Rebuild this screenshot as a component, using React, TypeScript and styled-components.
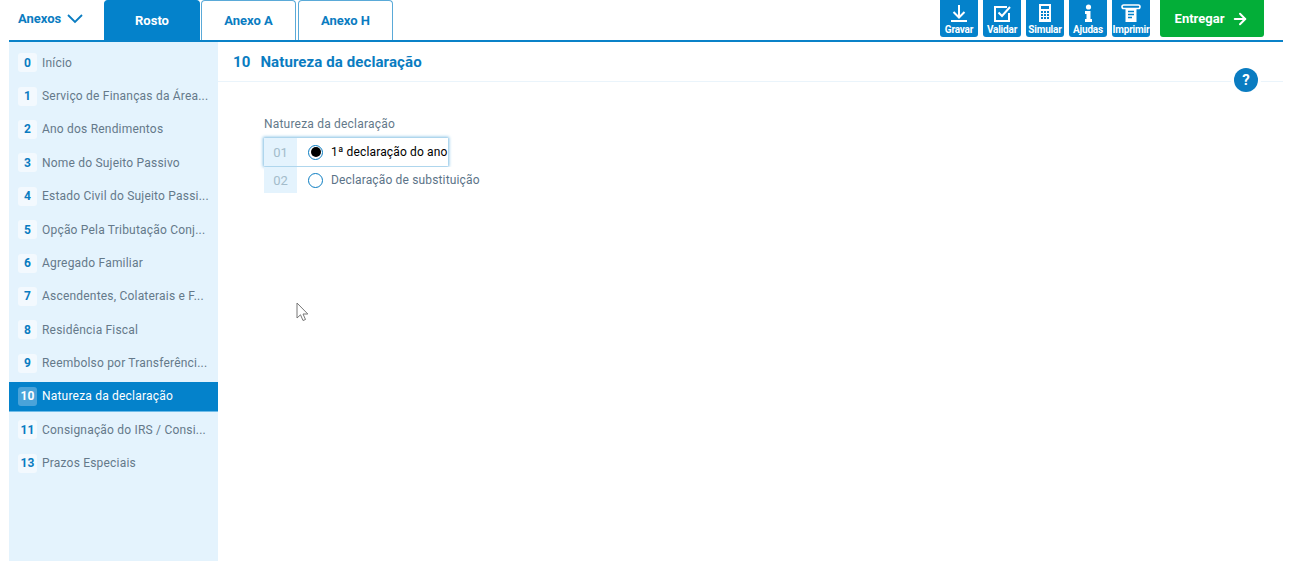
import React from 'react';
import styled, { createGlobalStyle } from 'styled-components';
import { ArrowRight } from 'lucide-react';

const GlobalStyle = createGlobalStyle`
	html, body {
		margin: 0;
		padding: 0;
		height: 100%;
		background: #fff;
		overflow: hidden;
	}
	body {
		font-family: Roboto, "Liberation Sans", sans-serif;
	}
`;

const Page = styled.div`
	width: 1274px;
	height: 561px;
	margin-left: 9px;
	display: flex;
	flex-direction: column;
	position: relative;
`;

const TopBar = styled.div`
	height: 40px;
	flex: none;
	display: flex;
	align-items: flex-end;
	border-bottom: 2px solid #0a82c8;
`;

const AnexosToggle = styled.div`
	width: 95px;
	height: 40px;
	flex: none;
	padding: 0 0 0 9px;
	box-sizing: border-box;
	display: flex;
	align-items: flex-start;
	gap: 6px;
	color: #0a7cc1;
	font-size: 13px;
	font-weight: 700;
	line-height: 38px;
`;

const Chevron = styled.svg`
	margin-top: 14px;
	flex: none;
`;

const Tab = styled.div<{ $active?: boolean }>`
	width: ${(p) => (p.$active ? '96px' : '95px')};
	height: 40px;
	margin-right: ${(p) => (p.$active ? '1px' : '2px')};
	box-sizing: border-box;
	display: flex;
	align-items: center;
	justify-content: center;
	font-size: 13px;
	font-weight: 700;
	border-radius: 4px 4px 0 0;
	color: ${(p) => (p.$active ? '#fff' : '#0a7cc1')};
	background: ${(p) => (p.$active ? '#0482cb' : '#fff')};
	border: 1px solid ${(p) => (p.$active ? '#0482cb' : '#5aaad8')};
	border-bottom: none;
`;

const Tools = styled.div`
	margin-left: auto;
	margin-right: 19px;
	height: 40px;
	display: flex;
	align-items: flex-start;
`;

const ToolBtn = styled.div`
	width: 38px;
	height: 37px;
	margin-right: 5px;
	background: #0482cb;
	border-radius: 0 0 3px 3px;
	color: #fff;
	display: flex;
	flex-direction: column;
	align-items: center;
	justify-content: flex-end;
	font-size: 10px;
	font-weight: 700;
	letter-spacing: -0.2px;
	padding-bottom: 2px;
	box-sizing: border-box;
	white-space: nowrap;

	svg {
		flex: none;
		margin-bottom: 1px;
	}
`;

const SendBtn = styled.div`
	width: 104px;
	height: 37px;
	margin-left: 5px;
	background: #03ae38;
	border-radius: 0 0 3px 3px;
	color: #fff;
	font-size: 13px;
	font-weight: 700;
	display: flex;
	align-items: center;
	justify-content: center;
	gap: 7px;
`;

const Body = styled.div`
	flex: 1;
	display: flex;
	min-height: 0;
`;

const Sidebar = styled.nav`
	width: 209px;
	flex: none;
	background: #e4f3fd;
	padding-top: 4px;
	box-sizing: border-box;
`;

const NavRow = styled.div<{ $active?: boolean }>`
	height: ${(p) => (p.$active ? '28.4px' : '33.4px')};
	margin: ${(p) => (p.$active ? '2.4px 0 2.6px' : '0')};
	display: flex;
	align-items: center;
	padding-left: 9px;
	gap: 5px;
	font-size: 12px;
	letter-spacing: 0.2px;
	color: ${(p) => (p.$active ? '#fff' : '#64798a')};
	background: ${(p) => (p.$active ? '#0482cb' : 'transparent')};
	box-shadow: ${(p) => (p.$active ? '0 1px 0 #6fbce8' : 'none')};
	white-space: nowrap;
`;

const NavNum = styled.span<{ $active?: boolean }>`
	width: 19px;
	height: 19px;
	flex: none;
	border-radius: 3px;
	display: flex;
	align-items: center;
	justify-content: center;
	font-size: 12px;
	font-weight: 700;
	letter-spacing: 0;
	color: ${(p) => (p.$active ? '#fff' : '#0a7cc1')};
	background: ${(p) => (p.$active ? '#4aa3d9' : '#f3f9fe')};
`;

const Main = styled.main`
	flex: 1;
	position: relative;
	display: flex;
	flex-direction: column;
`;

const SectionHead = styled.div`
	height: 39px;
	flex: none;
	padding-left: 15px;
	display: flex;
	align-items: center;
	gap: 10px;
	color: #0a7cc1;
	font-size: 15px;
	font-weight: 700;
	letter-spacing: 0.1px;
	border-bottom: 1px solid #eaf4fb;
`;

const HelpBadge = styled.div`
	position: absolute;
	top: 26px;
	right: 25px;
	width: 24px;
	height: 24px;
	border-radius: 50%;
	background: #0a7cc1;
	box-shadow: 0 0 0 3px #fff;
	color: #fff;
	font-size: 15px;
	font-weight: 700;
	display: flex;
	align-items: center;
	justify-content: center;
`;

const Form = styled.div`
	padding: 35px 0 0 46px;
	display: flex;
	flex-direction: column;
	align-items: flex-start;
`;

const FieldLabel = styled.div`
	font-size: 12px;
	letter-spacing: 0.2px;
	color: #64798a;
	height: 14px;
	line-height: 14px;
	margin-bottom: 7px;
`;

const OptionRow = styled.div<{ $focused?: boolean }>`
	height: ${(p) => (p.$focused ? '28px' : '26px')};
	margin-top: ${(p) => (p.$focused ? '0' : '1px')};
	display: flex;
	align-items: center;
	box-sizing: border-box;
	background: #fff;
	box-shadow: ${(p) => (p.$focused ? '0 0 3px 1px #7fbde3' : 'none')};
`;

const OptionCode = styled.span`
	width: 33px;
	height: 100%;
	flex: none;
	background: #e4f3fd;
	color: #a3bccb;
	font-size: 13px;
	display: flex;
	align-items: center;
	justify-content: center;
`;

const Radio = styled.span<{ $checked?: boolean }>`
	width: 15px;
	height: 15px;
	flex: none;
	box-sizing: border-box;
	margin: 0 8px 0 11px;
	border: 1.5px solid #0a7cc1;
	border-radius: 50%;
	background: #fff;
	display: flex;
	align-items: center;
	justify-content: center;

	&::after {
		content: '';
		width: 10px;
		height: 10px;
		border-radius: 50%;
		background: ${(p) => (p.$checked ? '#000' : 'transparent')};
	}
`;

const OptionText = styled.span<{ $checked?: boolean }>`
	font-size: 12px;
	letter-spacing: 0.15px;
	white-space: nowrap;
	color: ${(p) => (p.$checked ? '#000' : '#5b7388')};
`;

const Cursor = styled.svg`
	position: absolute;
	left: 287px;
	top: 302px;
`;

const sections: [string, string][] = [
	['0', 'Início'],
	['1', 'Serviço de Finanças da Área...'],
	['2', 'Ano dos Rendimentos'],
	['3', 'Nome do Sujeito Passivo'],
	['4', 'Estado Civil do Sujeito Passi...'],
	['5', 'Opção Pela Tributação Conj...'],
	['6', 'Agregado Familiar'],
	['7', 'Ascendentes, Colaterais e F...'],
	['8', 'Residência Fiscal'],
	['9', 'Reembolso por Transferênci...'],
	['10', 'Natureza da declaração'],
	['11', 'Consignação do IRS / Consi...'],
	['13', 'Prazos Especiais'],
];

const GravarIcon = () => (
	<svg width="20" height="20" viewBox="0 0 20 20" fill="none" stroke="#fff" strokeWidth="2">
		<path d="M10 2v12M4.500 9l5.500 5.500L15.500 9M2 18h16" />
	</svg>
);

const ValidarIcon = () => (
	<svg width="20" height="20" viewBox="0 0 20 20" fill="none" stroke="#fff" strokeWidth="2">
		<path d="M17 10v8H3V4h12" />
		<path d="M6.500 9.500l3.500 3.500 8-9" />
	</svg>
);

const SimularIcon = () => (
	<svg width="20" height="20" viewBox="0 0 20 20" fill="#fff">
		<path
			fillRule="evenodd"
			d="M4 1h12v18H4zM6 3v3h8V3zM6 8v2h2V8zM9 8v2h2V8zM12 8v2h2V8zM6 11v2h2v-2zM9 11v2h2v-2zM12 11v2h2v-2zM6 14v2h2v-2zM9 14v2h2v-2zM12 14v2h2v-2z"
		/>
	</svg>
);

const AjudasIcon = () => (
	<svg width="20" height="20" viewBox="0 0 20 20" fill="#fff">
		<circle cx="10.500" cy="4" r="2.600" />
		<path d="M7 8h5.500v8H14v3H7v-3h1.500v-5H7z" />
	</svg>
);

const ImprimirIcon = () => (
	<svg width="20" height="20" viewBox="0 0 20 20" fill="none" stroke="#fff">
		<rect x="1" y="2" width="18" height="3.500" rx="1.750" strokeWidth="1.600" />
		<path d="M4.500 5v14h11V5" fill="#fff" strokeWidth="0" />
		<path d="M7 8.500h6M7 11.500h6M7 14.500h4" stroke="#0482cb" strokeWidth="1.400" />
	</svg>
);

export default function App() {
	return (
		<Page>
			<GlobalStyle />
			<TopBar>
				<AnexosToggle>
					Anexos
					<Chevron width="16" height="10" viewBox="0 0 16 10" fill="none" stroke="#0a7cc1" strokeWidth="1.800">
						<path d="M1 1l7 7 7-7" />
					</Chevron>
				</AnexosToggle>
				<Tab $active>Rosto</Tab>
				<Tab>Anexo A</Tab>
				<Tab>Anexo H</Tab>
				<Tools>
					<ToolBtn>
						<GravarIcon />
						Gravar
					</ToolBtn>
					<ToolBtn>
						<ValidarIcon />
						Validar
					</ToolBtn>
					<ToolBtn>
						<SimularIcon />
						Simular
					</ToolBtn>
					<ToolBtn>
						<AjudasIcon />
						Ajudas
					</ToolBtn>
					<ToolBtn>
						<ImprimirIcon />
						Imprimir
					</ToolBtn>
					<SendBtn>
						Entregar
						<ArrowRight size={18} strokeWidth={2.6} />
					</SendBtn>
				</Tools>
			</TopBar>
			<Body>
				<Sidebar>
					{sections.map(([num, label]) => {
						const active = num === '10';
						return (
							<NavRow key={num} $active={active}>
								<NavNum $active={active}>{num}</NavNum>
								{label}
							</NavRow>
						);
					})}
				</Sidebar>
				<Main>
					<SectionHead>
						<span>10</span>
						<span>Natureza da declaração</span>
					</SectionHead>
					<HelpBadge>?</HelpBadge>
					<Form>
						<FieldLabel>Natureza da declaração</FieldLabel>
						<OptionRow $focused>
							<OptionCode>01</OptionCode>
							<Radio $checked />
							<OptionText $checked>1ª declaração do ano</OptionText>
						</OptionRow>
						<OptionRow>
							<OptionCode>02</OptionCode>
							<Radio />
							<OptionText>Declaração de substituição</OptionText>
						</OptionRow>
					</Form>
				</Main>
			</Body>
			<Cursor width="13" height="20" viewBox="0 0 13 20" fill="#fff" stroke="#777" strokeWidth="1">
				<path d="M1 1v15l3.500-3.200L7 18.500l2.500-1-2.500-5.500h4.800z" />
			</Cursor>
		</Page>
	);
}
